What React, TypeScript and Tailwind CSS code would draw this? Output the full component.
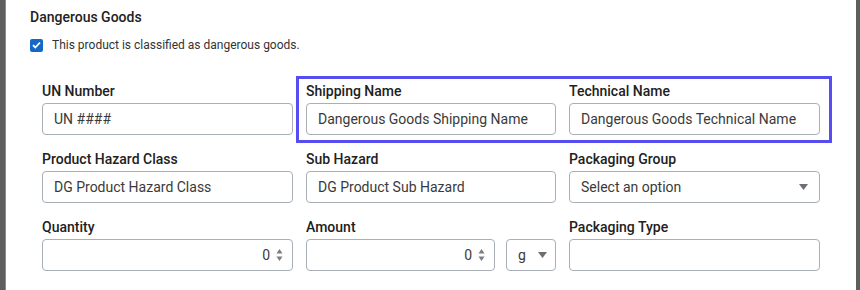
import type { ReactNode } from 'react';

const inputBox =
  'flex h-[32px] items-center rounded-[4px] border border-[#a9afb6] bg-white px-[11px] text-[14px] text-[#3a3a3a]';

function Field({ label, children }: { label: string; children: ReactNode }) {
  return (
    <div className="flex flex-col gap-[2px]">
      <div className="h-[20px] text-[14px] leading-[20px] font-medium text-[#212121]">{label}</div>
      {children}
    </div>
  );
}

function Caret() {
  return (
    <svg width="9" height="6" viewBox="0 0 9 6" className="shrink-0">
      <path d="M0 0h9L4.5 6z" fill="#6b6f75" />
    </svg>
  );
}

function Spinner() {
  return (
    <svg width="7" height="14" viewBox="0 0 7 14" className="ml-[6px] shrink-0">
      <path d="M0.5 5.5L3.5 1l3 4.5z" fill="#7a7e84" />
      <path d="M0.5 8.5h6L3.5 13z" fill="#7a7e84" />
    </svg>
  );
}

function NumberBox({ className = '' }: { className?: string }) {
  return (
    <div className={`${inputBox} justify-end pr-[9px] ${className}`}>
      <span>0</span>
      <Spinner />
    </div>
  );
}

export default function App() {
  return (
    <div className="flex h-[290px] w-[860px] bg-white font-['Roboto',sans-serif]">
      <div className="w-[6px] shrink-0 border-r border-[#8a8a8a] bg-[#5e5e5e]" />
      <div className="flex-1 pl-[24px] pt-[7px]">
        <div className="h-[20px] text-[14px] leading-[20px] font-medium text-[#222]">
          Dangerous Goods
        </div>
        <label className="mt-[10px] flex h-[16px] items-center gap-[9px] text-[12px] text-[#333]">
          <span className="flex h-[13px] w-[13px] items-center justify-center rounded-[2px] bg-[#1668c7]">
            <svg width="9" height="8" viewBox="0 0 9 8">
              <path d="M1 4.2l2.3 2.3L8 1.5" fill="none" stroke="white" strokeWidth="1.8" />
            </svg>
          </span>
          This product is classified as dangerous goods.
        </label>

        <div className="relative mt-[28px] ml-[12px] grid grid-cols-[251px_250px_251px] gap-x-[13px] gap-y-[14px]">
          <div className="pointer-events-none absolute top-[-5px] left-[254px] h-[67px] w-[536px] border-[3px] border-[#574cf0]" />

          <Field label="UN Number">
            <div className={inputBox}>UN ####</div>
          </Field>
          <Field label="Shipping Name">
            <div className={inputBox}>Dangerous Goods Shipping Name</div>
          </Field>
          <Field label="Technical Name">
            <div className={inputBox}>Dangerous Goods Technical Name</div>
          </Field>

          <Field label="Product Hazard Class">
            <div className={inputBox}>DG Product Hazard Class</div>
          </Field>
          <Field label="Sub Hazard">
            <div className={`${inputBox} border-[#3d86d4]`}>DG Product Sub Hazard</div>
          </Field>
          <Field label="Packaging Group">
            <div className={`${inputBox} justify-between pr-[11px]`}>
              <span>Select an option</span>
              <Caret />
            </div>
          </Field>

          <Field label="Quantity">
            <NumberBox />
          </Field>
          <Field label="Amount">
            <div className="flex gap-[11px]">
              <NumberBox className="w-[189px]" />
              <div className={`${inputBox} w-[50px] justify-between pr-[8px]`}>
                <span>g</span>
                <Caret />
              </div>
            </div>
          </Field>
          <Field label="Packaging Type">
            <div className={inputBox} />
          </Field>
        </div>
      </div>
      <div className="w-[4px] shrink-0 bg-[#5e5e5e]" />
    </div>
  );
}
